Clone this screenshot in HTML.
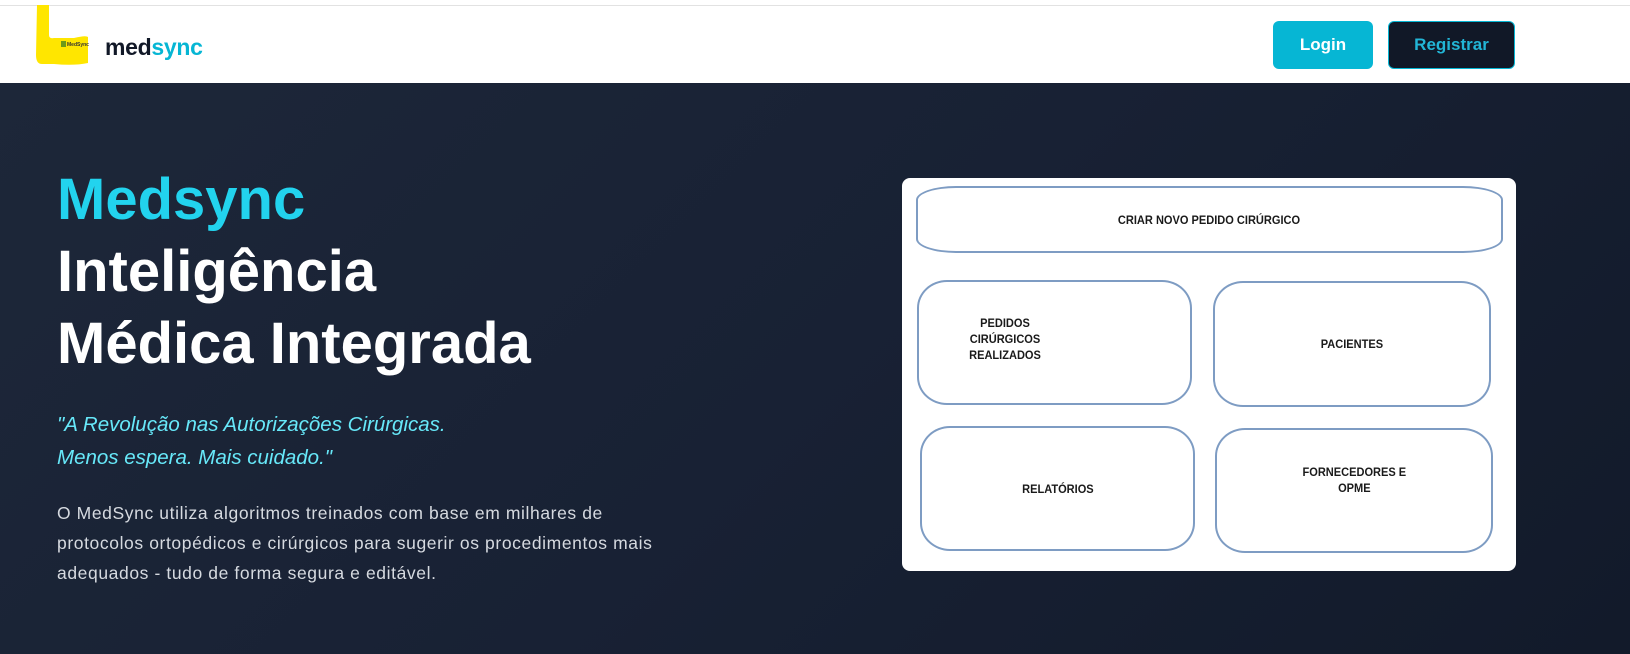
<!DOCTYPE html>
<html><head><meta charset="utf-8"><style>
*{margin:0;padding:0;box-sizing:border-box}
body{width:1630px;height:654px;overflow:hidden;font-family:"Liberation Sans",sans-serif;background:#fff;position:relative}
.hdr{position:absolute;left:0;top:0;width:1630px;height:83px;background:#fff}
.hdr .line{position:absolute;left:0;top:5px;width:1630px;height:1px;background:#e2e2e2}
.brand{position:absolute;left:105px;top:34px;font-size:23px;font-weight:bold;color:#111827;letter-spacing:-0.3px}
.brand span{color:#06b6d4}
.btn{position:absolute;top:21px;height:48px;border-radius:6px;font-size:17px;font-weight:bold;display:flex;align-items:center;justify-content:center}
.login{left:1273px;width:100px;background:#06b6d4;color:#fff}
.reg{left:1388px;width:127px;background:#111827;color:#22b5d6;border:1px solid #06b6d4}
.hero{position:absolute;left:0;top:83px;width:1630px;height:571px;background:linear-gradient(135deg,#1d2739 0%,#182134 50%,#121a2a 100%)}
h1{position:absolute;left:57px;top:164px;font-size:58px;line-height:72px;font-weight:bold;color:#fff}
h1 .c{color:#22d3ee}
.q{position:absolute;left:57px;top:408px;font-size:20.5px;line-height:33px;font-style:italic;color:#67e8f9;white-space:nowrap}
.p{position:absolute;left:57px;top:498px;font-size:17.5px;line-height:30px;color:#d6dae0;white-space:nowrap;letter-spacing:0.6px}
.card{position:absolute;left:902px;top:178px;width:614px;height:393px;background:#fff;border-radius:8px}
.b{position:absolute;border:2.5px solid #7e9cc3;display:flex;align-items:center;justify-content:center;text-align:center;font-size:12px;font-weight:bold;color:#1a1a1a;line-height:16px}
.b span{display:inline-block;transform:scaleX(0.92)}
</style></head><body>
<div class="hdr"><div class="line"></div>
<svg style="position:absolute;left:34px;top:5px" width="58" height="62" viewBox="0 0 58 62"><path d="M3 0 H15 V30 Q15 34 20 33 H40 Q52 30 54 32 V58 Q40 61 20 59 H8 Q2 59 2 50 Z" fill="#ffe600"/><rect x="27" y="36" width="5" height="6" fill="#6b9a1a"/><text x="33" y="41" font-size="5" font-weight="bold" fill="#333" font-family="Liberation Sans">MedSync</text></svg>
<div class="brand">med<span>sync</span></div>
<div class="btn login">Login</div><div class="btn reg">Registrar</div>
</div>
<div class="hero"></div>
<h1><span class="c">Medsync</span><br>Inteligência<br>Médica Integrada</h1>
<div class="q">"A Revolução nas Autorizações Cirúrgicas.<br>Menos espera. Mais cuidado."</div>
<div class="p">O MedSync utiliza algoritmos treinados com base em milhares de<br>protocolos ortopédicos e cirúrgicos para sugerir os procedimentos mais<br>adequados - tudo de forma segura e editável.</div>
<div class="card">
<div class="b" style="left:14px;top:8px;width:587px;height:67px;border-radius:40px/14px"><span>CRIAR NOVO PEDIDO CIRÚRGICO</span></div>
<div class="b" style="left:15px;top:102px;width:275px;height:125px;border-radius:30px/28px"><span style="margin-left:-100px;margin-top:-8px">PEDIDOS<br>CIRÚRGICOS<br>REALIZADOS</span></div>
<div class="b" style="left:311px;top:103px;width:278px;height:126px;border-radius:30px/28px"><span>PACIENTES</span></div>
<div class="b" style="left:18px;top:248px;width:275px;height:125px;border-radius:30px/28px"><span>RELATÓRIOS</span></div>
<div class="b" style="left:313px;top:250px;width:278px;height:125px;border-radius:30px/28px"><span style="margin-top:-22px">FORNECEDORES E<br>OPME</span></div>
</div>
</body></html>
